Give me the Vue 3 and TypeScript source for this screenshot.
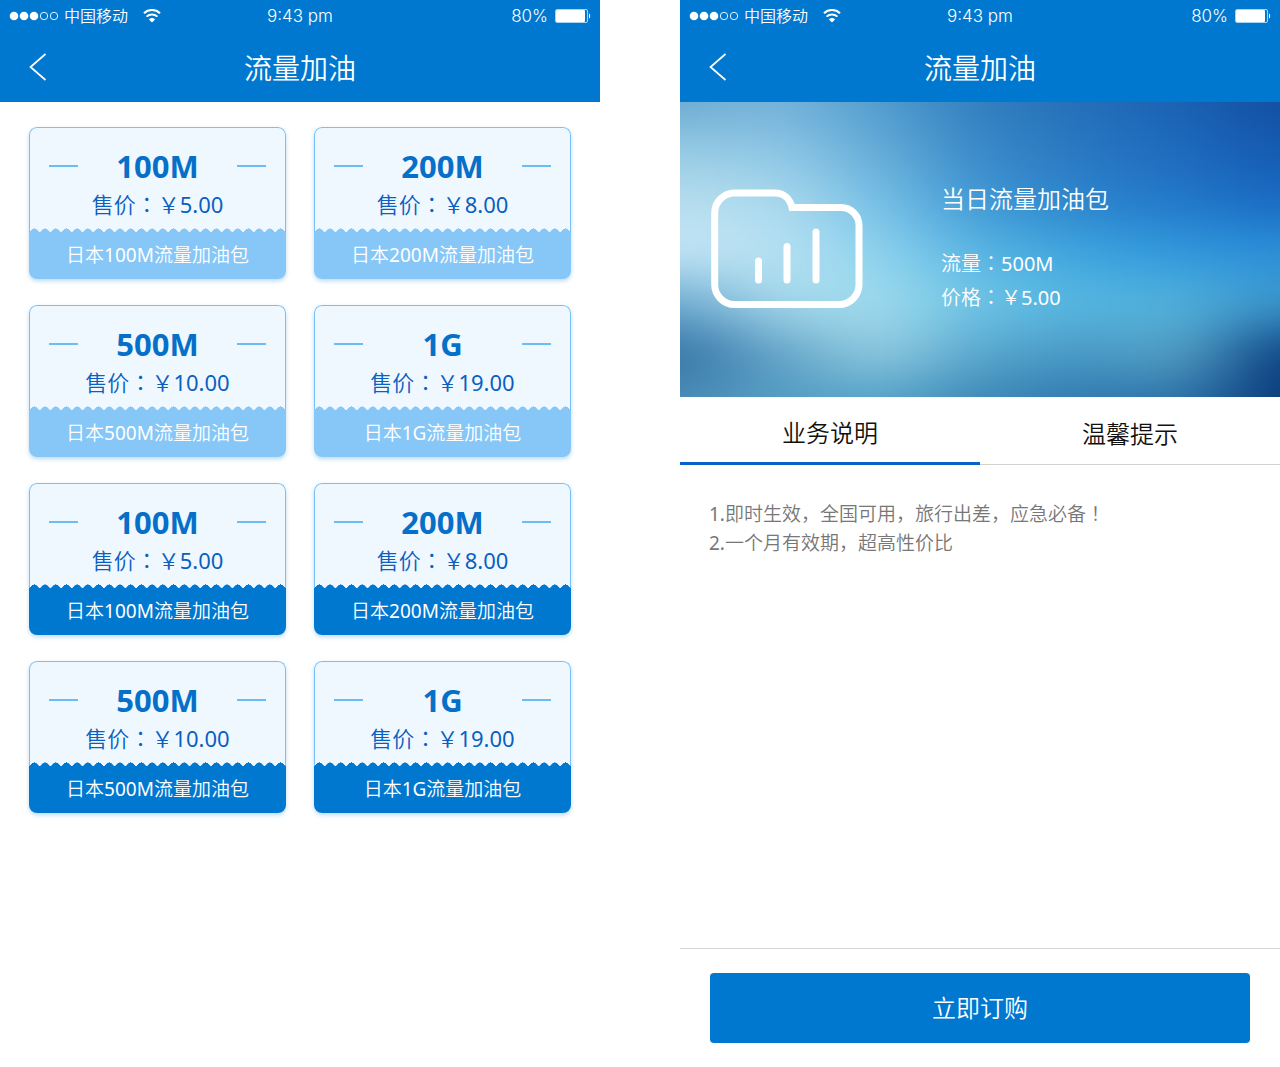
<script setup lang="ts">
import { ref } from 'vue'

interface Pack {
  size: string
  price: string
  active: boolean
}

const packs: Pack[] = [
  { size: '100M', price: '5.00', active: false },
  { size: '200M', price: '8.00', active: false },
  { size: '500M', price: '10.00', active: false },
  { size: '1G', price: '19.00', active: false },
  { size: '100M', price: '5.00', active: true },
  { size: '200M', price: '8.00', active: true },
  { size: '500M', price: '10.00', active: true },
  { size: '1G', price: '19.00', active: true },
]

const screens = ['list', 'detail'] as const
const tabs = ['业务说明', '温馨提示']
const current = ref(0)

// Colour field behind the banner: one row per 50 units, one column per 100 units
const field: string[][] = [
  ['#6aaad2', '#76b4da', '#509cce', '#307ebe', '#246eb8', '#1a62b4', '#124ea0'],
  ['#98cce4', '#90c8e6', '#64acd8', '#3a88c8', '#2878c2', '#1e6abe', '#145ab2'],
  ['#b8deee', '#acdaee', '#76c0e6', '#3e98d4', '#2c84cc', '#2278ca', '#186ac2'],
  ['#c4e6f6', '#b8e2f2', '#8cd2ee', '#58b4e2', '#3ca4de', '#3098dc', '#2c90da'],
  ['#6caad0', '#a8daec', '#a0dcee', '#6cc4e6', '#56b8e2', '#52b2dc', '#3c98cc'],
  ['#3270a4', '#64a4c8', '#94cce0', '#58a6ce', '#4898c4', '#56a2c4', '#0a3e82'],
  ['#4c8eb8', '#509cc2', '#50a2c8', '#3a86b4', '#2e78b0', '#2c70a8', '#083a7a'],
]
const cells = field.flatMap((row, r) =>
  row.map((fill, c) => ({
    fill,
    // Outer columns and rows run past the edge so that the blend keeps their colour
    x: c === 0 ? -150 : c * 100 - 50,
    y: r === 0 ? -75 : r * 50 - 25,
    width: c === 0 || c === 6 ? 201 : 101,
    height: r === 0 || r === 6 ? 101 : 51,
  })),
)
</script>

<template>
  <div class="board">
    <section v-for="screen in screens" :key="screen" class="screen">
      <header class="top">
        <div class="status">
          <div class="carrier">
            <svg class="signal" width="50" height="10" viewBox="0 0 50 10" aria-hidden="true">
              <circle cx="5" cy="5" r="4.3" fill="#fff" />
              <circle cx="15" cy="5" r="4.3" fill="#fff" />
              <circle cx="25" cy="5" r="4.3" fill="#fff" />
              <circle cx="35" cy="5" r="3.7" fill="none" stroke="#fff" stroke-width="0.9" />
              <circle cx="45" cy="5" r="3.7" fill="none" stroke="#fff" stroke-width="0.9" />
            </svg>
            <span>中国移动</span>
            <svg class="wifi" width="18" height="14" viewBox="0 0 18 14" aria-hidden="true">
              <path d="M1 4.200a11.600 11.600 0 0 1 16 0" fill="none" stroke="#fff" stroke-width="2.200" />
              <path d="M3.600 7.600a7.800 7.800 0 0 1 10.800 0" fill="none" stroke="#fff" stroke-width="2" />
              <path d="M9 13.600 5.900 10.500a4.500 4.500 0 0 1 6.200 0Z" fill="#fff" />
            </svg>
          </div>
          <span class="time">9:43 pm</span>
          <div class="power">
            <span>80%</span>
            <svg width="36" height="14" viewBox="0 0 36 14" aria-hidden="true">
              <rect x="0.5" y="0.5" width="32" height="13" rx="1.5" fill="none" stroke="#a9d3f3" />
              <rect x="1" y="1" width="29" height="12" rx="1" fill="#fff" />
              <path d="M34 4.500c1.600.6 1.600 4.400 0 5Z" fill="#fff" />
            </svg>
          </div>
        </div>
        <div class="nav">
          <button class="back" type="button" aria-label="返回">
            <svg width="18" height="28" viewBox="0 0 18 28" aria-hidden="true">
              <path d="M16.500 1 1.500 14l15 13" fill="none" stroke="#fff" stroke-width="1.700" />
            </svg>
          </button>
          <h1>流量加油</h1>
        </div>
      </header>

      <main v-if="screen === 'list'" class="packs">
        <button
          v-for="(pack, i) in packs"
          :key="i"
          type="button"
          class="pack"
          :class="{ active: pack.active }"
        >
          <span class="body">
            <span class="size">{{ pack.size }}</span>
            <span class="price">售价<span class="mid">：</span>￥<span class="num">{{ pack.price }}</span></span>
          </span>
          <span class="strip">日本<span class="num">{{ pack.size }}</span>流量加油包</span>
        </button>
      </main>

      <template v-else>
        <div class="banner">
          <svg class="glow" viewBox="0 0 600 294" preserveAspectRatio="none" aria-hidden="true">
            <defs>
              <filter id="soften" x="-20%" y="-20%" width="140%" height="140%" color-interpolation-filters="sRGB">
                <feGaussianBlur stdDeviation="44 22" />
              </filter>
            </defs>
            <g filter="url(#soften)">
              <rect
                v-for="(cell, i) in cells"
                :key="i"
                :x="cell.x"
                :y="cell.y"
                :width="cell.width"
                :height="cell.height"
                :fill="cell.fill"
              />
            </g>
          </svg>
          <div class="art">
            <svg width="152" height="120" viewBox="0 0 152 120" fill="none" stroke="#fff" stroke-width="7" aria-hidden="true">
              <path d="M3.700 24.500a20 20 0 0 1 20-20.500H64c9 0 15 6 17 14.500H130a18 18 0 0 1 18 18V95a20 20 0 0 1-20 20.500H23.700a20 20 0 0 1-20-20.500Z" />
              <path d="M47.500 72v19M76 57.500v33.500M105 43v48" stroke-linecap="round" />
            </svg>
          </div>
          <div class="info">
            <h2>当日流量加油包</h2>
            <p>流量<span class="mid">：</span><span class="num">500M</span></p>
            <p>价格<span class="mid">：</span>￥<span class="num">5.00</span></p>
          </div>
        </div>
        <div class="tabs" role="tablist">
          <button
            v-for="(tab, i) in tabs"
            :key="tab"
            type="button"
            role="tab"
            :aria-selected="current === i"
            :class="{ on: current === i }"
            @click="current = i"
          >
            {{ tab }}
          </button>
        </div>
        <main class="notes">
          <p><span class="num">1.</span>即时生效，全国可用，旅行出差，应急必备<span class="mid">！</span></p>
          <p><span class="num">2.</span>一个月有效期，超高性价比</p>
        </main>
        <footer class="order">
          <button type="button">立即订购</button>
        </footer>
      </template>
    </section>
  </div>
</template>

<style>
body {
  margin: 0;
  background: #fff;
}
</style>

<style scoped>
.board {
  display: grid;
  grid-template-columns: 1fr 1fr;
  gap: 80px;
  min-height: 100vh;
  font-family: "Noto Sans", "Noto Sans CJK SC", sans-serif;
  font-weight: 350;
}

.board * {
  box-sizing: border-box;
}

h1,
h2,
p {
  margin: 0;
  font-weight: 350;
}

button {
  padding: 0;
  border: 0;
  background: none;
  font: inherit;
  cursor: pointer;
}

/* Punctuation centred in its cell */
.mid {
  font-family: "Noto Sans CJK TC", sans-serif;
  line-height: 1;
}

/* Figures carry the regular weight to sit level with the characters */
.num {
  font-weight: 400;
}

.screen {
  display: flex;
  flex-direction: column;
}

.top {
  background: #0078d0;
  color: #fff;
}

.status {
  display: grid;
  grid-template-columns: 1fr auto 1fr;
  align-items: center;
  height: 32px;
  padding: 0 9px;
  font-family: Inter, "Noto Sans CJK SC", sans-serif;
  font-size: 17px;
  line-height: 32px;
}

.carrier,
.power {
  display: flex;
  align-items: center;
}

.carrier {
  gap: 5px;
  font-size: 16px;
}

.wifi {
  margin-left: 10px;
}

.power {
  justify-content: flex-end;
  gap: 7px;
}

.nav {
  display: grid;
  grid-template-columns: 60px 1fr 60px;
  align-items: center;
  height: 70px;
}

.back {
  display: flex;
  padding-left: 29px;
}

h1 {
  padding-top: 2px;
  font-size: 28px;
  line-height: 40px;
  text-align: center;
}

.packs {
  display: grid;
  grid-template-columns: 1fr 1fr;
  gap: 26px 28px;
  padding: 25px 29px;
}

.pack {
  display: flex;
  flex-direction: column;
  border-radius: 8px;
  background: #f0f8ff;
  box-shadow: 0 2px 4px rgba(60, 150, 220, 0.35);
  overflow: hidden;
  --strip: #86c7f8;
}

.pack.active {
  --strip: #0078d0;
}

.body {
  display: flex;
  flex-direction: column;
  align-self: stretch;
  padding: 18px 19px 10px;
  border: 1px solid #78c0f6;
  border-bottom: 0;
  border-radius: 8px 8px 0 0;
  color: #0a5fc0;
}

.size {
  display: flex;
  align-items: center;
  justify-content: space-between;
  color: #0670c8;
  font-size: 31px;
  font-weight: 700;
  line-height: 40px;
}

.size::before,
.size::after {
  content: "";
  width: 29px;
  height: 2px;
  background: #6cbcf4;
}

.price {
  height: 36px;
  font-size: 22px;
  line-height: 36px;
}

.strip {
  position: relative;
  align-self: stretch;
  height: 47px;
  background: var(--strip);
  color: #fff;
  font-size: 19px;
  line-height: 46px;
}

/* Torn edge: 24 teeth across the ticket */
.strip::before {
  content: "";
  position: absolute;
  right: 0;
  bottom: 100%;
  left: 0;
  height: 4px;
  background: conic-gradient(from 127deg at 50% 0, var(--strip) 106deg, transparent 0) 0 0 / calc(100% / 24) 100%;
}

.banner {
  position: relative;
  display: grid;
  grid-template-columns: 261px 1fr;
  height: 295px;
  overflow: hidden;
  color: #fff;
}

.glow {
  position: absolute;
  inset: 0;
  width: 100%;
  height: 100%;
}

.art {
  position: relative;
  padding: 87px 0 0 31px;
}

.info {
  position: relative;
  padding-top: 77px;
  font-size: 20px;
  line-height: 34px;
}

.info p {
  height: 34px;
}

h2 {
  margin-bottom: 28px;
  font-size: 24px;
  line-height: 40px;
}

.tabs {
  display: grid;
  grid-template-columns: 1fr 1fr;
  height: 68px;
}

.tabs button {
  padding-top: 6px;
  border-bottom: 1px solid #d2d2d2;
  color: #111;
  font-size: 24px;
  line-height: 58px;
}

.tabs .on {
  border-bottom: 3px solid #0a62c8;
}

.notes {
  flex: 1;
  padding: 35px 29px;
  color: #777;
  font-size: 19px;
  line-height: 29px;
}

.order {
  padding: 24px 30px;
  border-top: 1px solid #d6d6d6;
}

.order button {
  width: 100%;
  height: 70px;
  padding-bottom: 3px;
  border-radius: 4px;
  background: #0078d0;
  color: #fff;
  font-size: 24px;
}
</style>
